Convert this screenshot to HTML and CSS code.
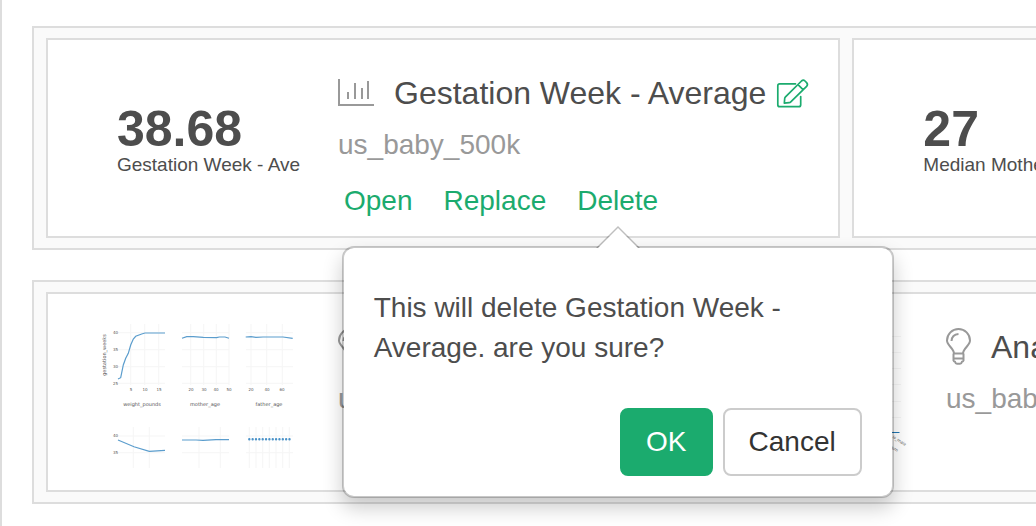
FILE: index.html
```html
<!DOCTYPE html>
<html lang="en">
<head>
  <meta charset="UTF-8">
  <meta name="viewport" content="width=device-width, initial-scale=1.0">
  <title>Dashboard</title>
  <link rel="stylesheet" href="styles.css">
</head>
<body>
  <main class="dashboard">

    <!-- First row -->
    <section class="board-row">
      <article class="card">
        <div class="thumb metric">
          <div class="metric-value">38.68</div>
          <div class="metric-label">Gestation Week - Ave</div>
        </div>
        <div class="card-info">
          <div class="card-heading">
            <svg class="card-icon" width="36" height="28" viewBox="0 0 36 28" fill="none" stroke="currentColor" stroke-width="2">
              <path d="M1 0V26H36M10 13V20M17 4V20M24 9V20M30 2V20"/>
            </svg>
            <h2 class="card-title">Gestation Week - Average</h2>
            <button class="edit-btn" type="button" aria-label="Edit">
              <svg width="32" height="30" viewBox="-1 -1 32 30" fill="none" stroke="currentColor" stroke-width="1.7" stroke-linecap="round" stroke-linejoin="round">
                <path d="M18.500 4.800H2.700Q.8 4.800 .8 6.700V25.700Q.8 27.700 2.700 27.700H21.800Q23.700 27.700 23.700 25.700V17.500"/>
                <path d="M7.300 24.200L7.700 19.500Q7.800 18.600 8.500 17.900L24.500 2Q26.300 .4 28 2L29.600 3.600Q31.300 5.500 29.600 7.300L13.800 22.900Q13.100 23.600 12.200 23.700ZM21 5.700L26 10.700"/>
              </svg>
            </button>
          </div>
          <div class="card-source">us_baby_500k</div>
          <div class="card-actions">
            <a href="#open">Open</a>
            <a href="#replace">Replace</a>
            <div class="popover-anchor">
              <a href="#delete">Delete</a>
              <div class="popover" role="dialog" aria-labelledby="confirmText">
                <p class="popover-text" id="confirmText">This will delete Gestation Week - Average. are you sure?</p>
                <div class="popover-buttons">
                  <button class="btn btn-ok" type="button">OK</button>
                  <button class="btn btn-cancel" type="button">Cancel</button>
                </div>
              </div>
            </div>
          </div>
        </div>
      </article>

      <article class="card">
        <div class="thumb metric">
          <div class="metric-value">27</div>
          <div class="metric-label">Median Mother Age</div>
        </div>
      </article>
    </section>

    <!-- Second row -->
    <section class="board-row">
      <article class="card">
        <svg class="thumb" width="290" height="196" viewBox="0 0 290 196">
          <path class="grid" d="M82.700 30V91M96.700 30V91M110.700 30V91M70 38.700H117M70 55.700H117M70 72.700H117M70 89.300H117"/>
          <path class="grid" d="M142.700 30V91M155.700 30V91M168.300 30V91M181 30V91M134 38.700H181M134 55.700H181M134 72.700H181M134 89.300H181"/>
          <path class="grid" d="M203 30V91M218.700 30V91M234.300 30V91M198 38.700H245M198 55.700H245M198 72.700H245M198 89.300H245"/>
          <path class="grid" d="M85.300 133V174M101.300 133V174M70 142H117M70 158.700H117"/>
          <path class="grid" d="M151 133V174M172.300 133V174M134 142H181M134 158.700H181"/>
          <path class="grid" d="M201.300 133V174M208 133V174M214.700 133V174M221.300 133V174M228 133V174M234.700 133V174M241.300 133V174M198 142H245M198 158.700H245"/>

          <path class="line" d="M70 85L72.700 83.700L75.300 71L77.700 64.300L80.300 59.300L82.700 51L85.300 45L87.700 42.300L93.700 40L97 39H117"/>
          <path class="line" d="M134 44.300L138.700 42.700H145.300L155.300 43.300L168.700 43.700L171.300 43H177L181 44.300"/>
          <path class="line" d="M197.700 43L203 42.700L208 43.300L215 43H235L244.700 44.300"/>
          <path class="line" d="M70 146L86 152.700L101.300 157.300L117 156.300"/>
          <path class="line" d="M134 146H148L155 146.300L168 145.700L181 145.700"/>
          <path class="dots" d="M201.300 145.300H242.500"/>

          <g class="tick" text-anchor="end">
            <text x="70" y="40">40</text>
            <text x="70" y="57">35</text>
            <text x="70" y="74">30</text>
            <text x="70" y="91">25</text>
            <text x="70" y="143">40</text>
            <text x="70" y="160">35</text>
          </g>
          <g class="tick" text-anchor="middle">
            <text x="83" y="97">5</text>
            <text x="97" y="97">10</text>
            <text x="111" y="97">15</text>
            <text x="143" y="97">20</text>
            <text x="156" y="97">30</text>
            <text x="168" y="97">40</text>
            <text x="181" y="97">50</text>
            <text x="203" y="97">20</text>
            <text x="219" y="97">40</text>
            <text x="234" y="97">60</text>
          </g>
          <g class="axis" text-anchor="middle">
            <text x="94" y="112">weight_pounds</text>
            <text x="157" y="112">mother_age</text>
            <text x="221" y="112">father_age</text>
            <text transform="translate(57.500 61) rotate(-90)">gestation_weeks</text>
          </g>
        </svg>
        <div class="card-info">
          <div class="card-heading">
            <svg class="card-icon" width="25" height="38" viewBox="0 0 25 38" fill="none" stroke="currentColor" stroke-width="2">
              <path d="M8 25.500C8 20.500 1 17.500 1 12.500A11.500 11.500 0 0 1 24 12.500C24 17.500 17 20.500 17 25.500ZM7.500 25.500V32.500Q7.800 33.500 9 33.800Q9.500 35.800 11 35.800H14Q15.500 35.800 16 33.800Q17.200 33.500 17.500 32.500V25.500M7.500 30.500H17.500"/>
              <path d="M5.500 13Q6 6.500 12.500 6"/>
            </svg>
          </div>
          <div class="card-source">us_baby_500k</div>
        </div>
      </article>

      <article class="card">
        <svg class="thumb" width="290" height="196" viewBox="0 0 290 196">
          <path class="grid" d="M60 42.500H245M60 58.500H245M60 74.500H245M60 90.500H245M60 107.500H245M60 123.500H245"/>
          <path class="bar-line" d="M225 138.500H243.500"/>
          <g class="tick" text-anchor="end">
            <text transform="translate(249 152) rotate(33)">is_male</text>
            <text transform="translate(241 158) rotate(33)">plurality_sum</text>
          </g>
        </svg>
        <div class="card-info">
          <div class="card-heading">
            <svg class="card-icon" width="25" height="38" viewBox="0 0 25 38" fill="none" stroke="currentColor" stroke-width="2">
              <path d="M8 25.500C8 20.500 1 17.500 1 12.500A11.500 11.500 0 0 1 24 12.500C24 17.500 17 20.500 17 25.500ZM7.500 25.500V32.500Q7.800 33.500 9 33.800Q9.500 35.800 11 35.800H14Q15.500 35.800 16 33.800Q17.200 33.500 17.500 32.500V25.500M7.500 30.500H17.500"/>
              <path d="M5.500 13Q6 6.500 12.500 6"/>
            </svg>
            <h2 class="card-title">Analytics</h2>
          </div>
          <div class="card-source">us_baby_500k</div>
        </div>
      </article>
    </section>

  </main>
</body>
</html>
```
FILE: styles.css
```css
:root {
  --green: #1bab6e;
  --text: #4d4d4d;
  --muted: #999;
  --border: #ddd;
  --panel: #fafafa;
}

* {
  box-sizing: border-box;
}

body {
  margin: 0;
  font-family: "Liberation Sans", Arial, sans-serif;
  font-size: 28px;
  line-height: 40px;
  color: var(--text);
  background: #fff;
}

/* Rows of cards run past the right edge of the board */
.dashboard {
  display: flex;
  flex-direction: column;
  gap: 30px;
  min-height: 100vh;
  padding: 26px 0 22px 30px;
  border-left: 2px solid var(--border);
  overflow: hidden;
}

.board-row {
  display: flex;
  gap: 12px;
  width: max-content;
  min-width: 100%;
  padding: 10px 12px;
  border: 2px solid var(--border);
  background: var(--panel);
}

/* Cards */
.card {
  display: flex;
  min-width: 596px;
  min-height: 200px;
  padding-right: 30px;
  border: 2px solid var(--border);
  background: #fff;
}

.thumb {
  flex: none;
  width: 290px;
}

.metric {
  padding: 64px 0 0 69px;
}

.metric-value {
  font-size: 50px;
  font-weight: bold;
  line-height: 50px;
}

.metric-label {
  font-size: 19px;
  line-height: 22px;
  white-space: nowrap;
}

.card-info {
  padding-top: 33px;
}

.card-heading {
  display: flex;
  align-items: center;
  height: 40px;
}

.card-icon {
  flex: none;
  margin-right: 20px;
  color: var(--muted);
}

.card-title {
  margin: 0;
  font-size: 32px;
  font-weight: normal;
  white-space: nowrap;
}

.edit-btn {
  display: flex;
  margin-left: 10px;
  padding: 0;
  border: 0;
  background: none;
  color: var(--green);
  cursor: pointer;
}

.edit-btn svg {
  overflow: visible;
}

.card-source {
  margin-top: 12px;
  color: var(--muted);
}

.card-actions {
  display: flex;
  gap: 31px;
  margin-top: 16px;
  padding-left: 6px;
}

.card-actions a {
  color: var(--green);
  text-decoration: none;
}

/* Chart thumbnails */
.grid {
  fill: none;
  stroke: #f5f5f5;
}

.line {
  fill: none;
  stroke: #5b9dcd;
  stroke-width: 1.2;
}

.dots {
  fill: none;
  stroke: #4a92c8;
  stroke-width: 2.4;
  stroke-linecap: round;
  stroke-dasharray: 0 3.35;
}

.bar-line {
  stroke: #1f77b4;
}

.tick,
.axis {
  font-family: "DejaVu Sans", sans-serif;
  fill: #555;
}

.tick {
  font-size: 4px;
}

.axis {
  font-size: 5px;
}

/* Delete confirmation */
.popover-anchor {
  position: relative;
}

.popover {
  position: absolute;
  top: calc(100% + 25px);
  left: 50%;
  z-index: 10;
  width: 552px;
  padding: 40px 30px 20px;
  border: 2px solid rgba(0, 0, 0, 0.2);
  border-radius: 12px;
  background: #fff;
  background-clip: padding-box;
  box-shadow: 0 10px 20px rgba(0, 0, 0, 0.2);
  transform: translateX(-50%);
}

.popover::before,
.popover::after {
  content: '';
  position: absolute;
  left: 50%;
  border-style: solid;
  border-color: transparent;
  border-top-width: 0;
  transform: translateX(-50%);
}

.popover::before {
  top: -22px;
  border-width: 0 22px 22px;
  border-bottom-color: rgba(0, 0, 0, 0.25);
}

.popover::after {
  top: -20px;
  border-width: 0 20px 20px;
  border-bottom-color: #fff;
}

.popover-text {
  margin: 0 0 40px;
}

.popover-buttons {
  display: flex;
  justify-content: flex-end;
  gap: 10px;
}

.btn {
  padding: 12px 24px;
  border: 2px solid;
  border-radius: 8px;
  font: inherit;
  cursor: pointer;
}

.btn-ok {
  border-color: var(--green);
  background: var(--green);
  color: #fff;
}

.btn-cancel {
  border-color: #ccc;
  background: #fff;
  color: #333;
}
```
